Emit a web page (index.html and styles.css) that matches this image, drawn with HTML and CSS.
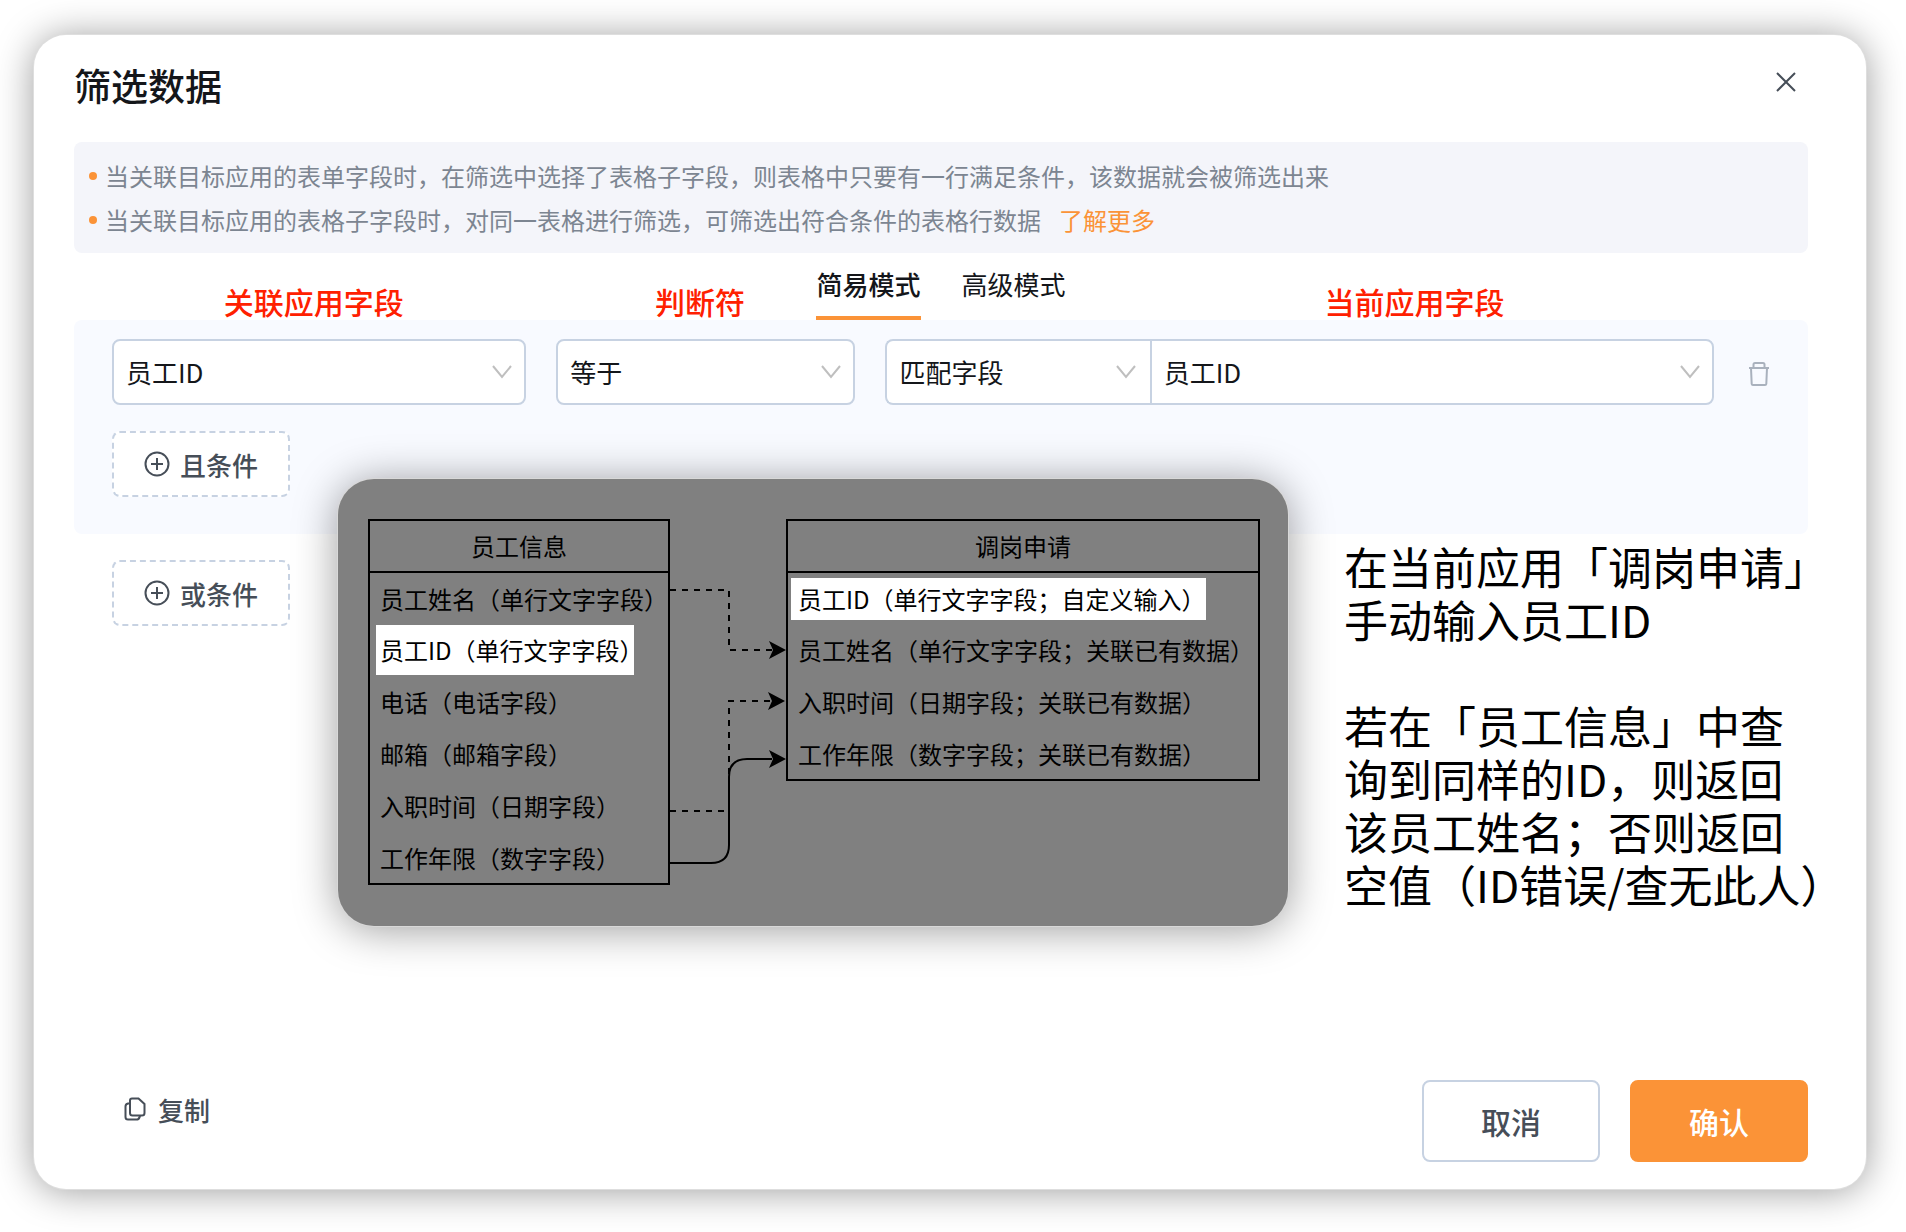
FILE: index.html
```html
<!DOCTYPE html>
<html lang="zh-CN">
<head>
    <meta charset="UTF-8">
    <meta name="viewport" content="width=device-width, initial-scale=1.0">
    <title>筛选数据</title>
    <link rel="stylesheet" href="styles.css">
</head>
<body>
    <div class="modal">
        <div class="header">
            <h1>筛选数据</h1>
            <button class="close-btn" aria-label="关闭">
                <svg width="22" height="22" viewBox="0 0 22 22"><path d="M2 2L20 20M20 2L2 20"/></svg>
            </button>
        </div>

        <ul class="tips">
            <li>当关联目标应用的表单字段时，在筛选中选择了表格子字段，则表格中只要有一行满足条件，该数据就会被筛选出来</li>
            <li>当关联目标应用的表格子字段时，对同一表格进行筛选，可筛选出符合条件的表格行数据<a href="#">了解更多</a></li>
        </ul>

        <div class="tabs">
            <button class="tab active">简易模式</button>
            <button class="tab">高级模式</button>
        </div>

        <div class="panel">
            <div class="condition">
                <div class="field">
                    <label class="label-source" for="sourceField">关联应用字段</label>
                    <select id="sourceField"><option>员工ID</option></select>
                    <svg class="arrow" width="20" height="14" viewBox="0 0 20 14"><path d="M1 1L10 12L19 1"/></svg>
                </div>
                <div class="field">
                    <label class="label-operator" for="operator">判断符</label>
                    <select id="operator"><option>等于</option></select>
                    <svg class="arrow" width="20" height="14" viewBox="0 0 20 14"><path d="M1 1L10 12L19 1"/></svg>
                </div>
                <div class="field-group">
                    <div class="field">
                        <select id="matchType" aria-label="匹配方式"><option>匹配字段</option></select>
                        <svg class="arrow" width="20" height="14" viewBox="0 0 20 14"><path d="M1 1L10 12L19 1"/></svg>
                    </div>
                    <div class="field">
                        <label class="label-target" for="targetField">当前应用字段</label>
                        <select id="targetField"><option>员工ID</option></select>
                        <svg class="arrow" width="20" height="14" viewBox="0 0 20 14"><path d="M1 1L10 12L19 1"/></svg>
                    </div>
                </div>
                <button class="delete-btn" aria-label="删除">
                    <svg width="22" height="26" viewBox="0 0 22 26"><path d="M1 7H21M5.500 7V3.500Q5.500 2 7 2H15Q16.500 2 16.500 3.500V7M3 7L3.700 23Q3.800 24 5 24H17Q18.200 24 18.300 23L19 7"/></svg>
                </button>
            </div>
            <button class="add-btn">
                <svg width="26" height="26" viewBox="0 0 26 26"><circle cx="13" cy="13" r="11.500"/><path d="M13 7V19M7 13H19"/></svg>
                且条件
            </button>
        </div>

        <button class="add-btn or-btn">
            <svg width="26" height="26" viewBox="0 0 26 26"><circle cx="13" cy="13" r="11.500"/><path d="M13 7V19M7 13H19"/></svg>
            或条件
        </button>

        <div class="footer">
            <button class="copy-btn">
                <svg width="22" height="24" viewBox="0 0 22 24"><path d="M8 1.500H14.500L20.500 7V16Q20.500 18.500 18 18.500H8.500Q6 18.500 6 16V3.500Q6 1.500 8 1.500Z"/><path d="M6 6.500H4Q1.500 7 1.500 9.500V20Q1.500 22.500 4 22.500H13.500Q15.500 22 16 18.500"/></svg>
                复制
            </button>
            <div class="actions">
                <button class="btn">取消</button>
                <button class="btn btn-primary">确认</button>
            </div>
        </div>

        <!-- Floating explanation over the form -->
        <div class="guide">
            <div class="diagram">
                <table class="entity entity-source">
                    <thead>
                        <tr><th>员工信息</th></tr>
                    </thead>
                    <tbody>
                        <tr><td>员工姓名（单行文字字段）</td></tr>
                        <tr><td><mark class="mark-source">员工ID（单行文字字段）</mark></td></tr>
                        <tr><td>电话（电话字段）</td></tr>
                        <tr><td>邮箱（邮箱字段）</td></tr>
                        <tr><td>入职时间（日期字段）</td></tr>
                        <tr><td>工作年限（数字字段）</td></tr>
                    </tbody>
                </table>
                <svg class="links" width="116" height="366" viewBox="0 0 116 366">
                    <path class="dashed" d="M0 71H59V131H102"/>
                    <path class="dashed" d="M0 292H59V182H102"/>
                    <path d="M0 344H41Q59 344 59 326V258Q59 240 77 240H102"/>
                    <path class="head" d="M116 131L99 122L103 131L99 140Z"/>
                    <path class="head" d="M115 182L98 173L102 182L98 191Z"/>
                    <path class="head" d="M116 240L99 231L103 240L99 249Z"/>
                </svg>
                <table class="entity entity-target">
                    <thead>
                        <tr><th>调岗申请</th></tr>
                    </thead>
                    <tbody>
                        <tr><td><mark class="mark-target">员工ID（单行文字字段；自定义输入）</mark></td></tr>
                        <tr><td>员工姓名（单行文字字段；关联已有数据）</td></tr>
                        <tr><td>入职时间（日期字段；关联已有数据）</td></tr>
                        <tr><td>工作年限（数字字段；关联已有数据）</td></tr>
                    </tbody>
                </table>
            </div>
            <div class="note">
                <p>在当前应用「调岗申请」<br>手动输入员工ID</p>
                <p>若在「员工信息」中查<br>询到同样的ID，则返回<br>该员工姓名；否则返回<br>空值（ID错误/查无此人）</p>
            </div>
        </div>
    </div>
</body>
</html>
```
FILE: styles.css
```css
:root {
    --primary: #fb9337;
    --text: #14161a;
    --text-dark: #464e58;
    --text-muted: #7c8591;
    --border: #c7d2e2;
    --tips-bg: #f4f5fa;
    --panel-bg: #f8faff;
    --note-red: #ff2000;
}

* {
    margin: 0;
    padding: 0;
    box-sizing: border-box;
}

body {
    display: flex;
    min-height: 100vh;
    padding: 35px 40px 43px 34px;
    background: #ffffff;
    color: var(--text);
    font-family: "Noto Sans CJK SC", "Liberation Sans", sans-serif;
    font-size: 26px;
}

button,
select {
    font: inherit;
    color: inherit;
    background: none;
    border: none;
    cursor: pointer;
}

svg {
    display: block;
    flex: none;
    fill: none;
    stroke: currentColor;
    stroke-width: 2;
}

.modal {
    position: relative;
    flex: 1;
    display: flex;
    flex-direction: column;
    padding: 26px 58px 27px 40px;
    background: #ffffff;
    border-radius: 32px;
    box-shadow: 0 0 0 1px #dedede, 0 2px 38px rgba(0, 0, 0, 0.4);
}

.header {
    display: flex;
    justify-content: space-between;
    align-items: flex-start;
    height: 81px;
}

.header h1 {
    font-size: 37px;
    line-height: 48px;
    font-weight: 500;
}

.close-btn {
    padding: 10px 11px;
    color: var(--text-dark);
}

.tips {
    padding: 12px 15px 11px;
    background: var(--tips-bg);
    border-radius: 8px;
    color: var(--text-muted);
    font-size: 24px;
    line-height: 44px;
    list-style: none;
}

.tips li {
    display: flex;
    align-items: center;
}

.tips li::before {
    content: "";
    width: 8px;
    height: 8px;
    margin-right: 8px;
    border-radius: 50%;
    background: var(--primary);
}

.tips a {
    margin-left: 18px;
    color: var(--primary);
    text-decoration: none;
}

.tabs {
    display: flex;
    justify-content: center;
    gap: 41px;
    height: 67px;
}

.tab {
    padding: 0 0 2px;
    border-bottom: 4px solid transparent;
}

.tab.active {
    border-bottom-color: var(--primary);
    font-weight: 500;
}

.panel {
    padding: 19px 38px 37px;
    background: var(--panel-bg);
    border-radius: 8px;
}

.condition {
    display: grid;
    grid-template-columns: 414fr 299fr 828fr 26px;
    column-gap: 30px;
    align-items: center;
}

.field {
    position: relative;
}

.field select {
    display: block;
    width: 100%;
    height: 66px;
    padding: 0 12px 2px;
    border: 2px solid var(--border);
    border-radius: 8px;
    background: #ffffff;
    appearance: none;
}

.field label {
    position: absolute;
    bottom: 100%;
    margin-bottom: 16px;
    color: var(--note-red);
    font-size: 30px;
    font-weight: 500;
    line-height: 44px;
    white-space: nowrap;
}

.label-source {
    left: 27%;
}

.label-operator {
    left: 33%;
}

.label-target {
    left: 31%;
}

.arrow {
    position: absolute;
    right: 14px;
    top: 26px;
    color: #bfbfbf;
    pointer-events: none;
}

.field-group {
    display: grid;
    grid-template-columns: 264fr 564fr;
}

.field-group .field:first-child select {
    border-right: none;
    border-radius: 8px 0 0 8px;
}

.field-group .field:last-child select {
    border-radius: 0 8px 8px 0;
}

.delete-btn {
    padding: 4px 0 0 4px;
    color: #a9b1bd;
}

.add-btn {
    display: flex;
    align-items: center;
    justify-content: center;
    gap: 10px;
    width: 178px;
    height: 66px;
    margin-top: 26px;
    border: 2px dashed var(--border);
    border-radius: 8px;
    background: #ffffff;
    color: var(--text-dark);
    font-weight: 500;
}

.or-btn {
    margin-left: 38px;
}

.footer {
    display: flex;
    justify-content: space-between;
    align-items: flex-start;
    margin-top: auto;
}

.copy-btn {
    display: flex;
    align-items: center;
    gap: 12px;
    height: 58px;
    margin-left: 50px;
    color: var(--text-dark);
    font-weight: 500;
}

.actions {
    display: flex;
    gap: 30px;
}

.btn {
    width: 178px;
    height: 82px;
    border: 2px solid var(--border);
    border-radius: 8px;
    color: var(--text-dark);
    font-size: 30px;
    font-weight: 500;
}

.btn-primary {
    border-color: var(--primary);
    background: var(--primary);
    color: #ffffff;
}

.guide {
    position: absolute;
    top: 444px;
    left: 304px;
    display: flex;
    align-items: flex-start;
    gap: 56px;
    color: #000000;
}

.diagram {
    display: flex;
    align-items: flex-start;
    padding: 40px 28px 41px 30px;
    background: #808080;
    border-radius: 36px;
    box-shadow: 0 0 0 1px #d8d8d8, 0 3px 44px rgba(0, 0, 0, 0.4);
}

.entity {
    border: 2px solid #000000;
    border-collapse: collapse;
    font-size: 24px;
    line-height: 34px;
    white-space: nowrap;
}

.entity-source {
    width: 300px;
}

.entity-target {
    width: 474px;
}

.entity th {
    height: 52px;
    border-bottom: 2px solid #000000;
    font-weight: 400;
    text-align: center;
}

.entity td {
    height: 52px;
    padding-left: 10px;
    text-align: left;
}

/* the trailing full-width bracket has blank space, so the highlight stops short of it */
.entity mark {
    display: block;
    background: #ffffff;
    color: inherit;
}

.mark-source {
    width: 258px;
    margin-left: -4px;
    padding: 8px 4px;
}

.mark-target {
    width: 415px;
    margin-left: -7px;
    padding: 4px 7px;
}

.links {
    color: #000000;
}

.links .dashed {
    stroke-dasharray: 6 6;
}

.links .head {
    fill: #000000;
    stroke: none;
}

.note {
    padding-top: 61px;
    font-size: 44px;
    line-height: 53px;
    white-space: nowrap;
}

.note p + p {
    margin-top: 53px;
}
```
